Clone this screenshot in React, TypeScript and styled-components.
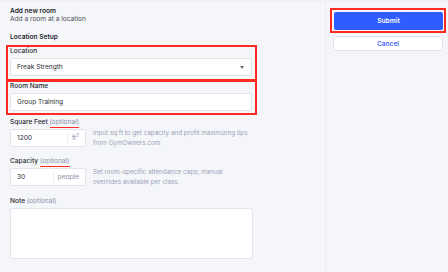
import styled, { createGlobalStyle } from 'styled-components';

const GlobalStyle = createGlobalStyle`
  html, body {
    margin: 0;
    padding: 0;
    background: #f5f6fa;
  }
  body {
    font-family: Inter, "Liberation Sans", sans-serif;
    color: #2b2d33;
    -webkit-font-smoothing: antialiased;
  }
  * { box-sizing: border-box; }
`;

const App = (): JSX.Element => {
  return (
    <>
      <GlobalStyle />
      <Page>
        <Main>
          <Header>
            <Title>Add new room</Title>
            <Subtitle>Add a room at a location</Subtitle>
          </Header>
          <SectionTitle>Location Setup</SectionTitle>

          <Highlight>
            <Label>Location</Label>
            <SelectBox>
              <span>Freak Strength</span>
              <Caret />
            </SelectBox>
          </Highlight>

          <Highlight $joined>
            <Label>Room Name</Label>
            <TextBox>Group Training</TextBox>
          </Highlight>

          <Field $gap={3}>
            <Label>
              Square Feet <Optional $marked>(optional)</Optional>
            </Label>
            <InlineRow>
              <UnitBox>
                <UnitValue>1200</UnitValue>
                <Unit>
                  ft<sup>2</sup>
                </Unit>
              </UnitBox>
              <Helper>
                Input sq ft to get capacity and profit maximizing tips
                <br />
                from GymOwners.com
              </Helper>
            </InlineRow>
          </Field>

          <Field $gap={9}>
            <Label>
              Capacity <Optional $marked>(optional)</Optional>
            </Label>
            <InlineRow>
              <UnitBox>
                <UnitValue>30</UnitValue>
                <Unit>people</Unit>
              </UnitBox>
              <Helper>
                Set room-specific attendance caps; manual
                <br />
                overrides available per class.
              </Helper>
            </InlineRow>
          </Field>

          <Field $gap={10}>
            <Label>
              Note <Optional>(optional)</Optional>
            </Label>
            <NoteArea />
          </Field>
        </Main>

        <Sidebar>
          <SubmitMark>
            <SubmitButton>Submit</SubmitButton>
          </SubmitMark>
          <CancelButton>Cancel</CancelButton>
        </Sidebar>
      </Page>
    </>
  );
};

export default App;

const Page = styled.div`
  display: flex;
  width: 448px;
  height: 272px;
  overflow: hidden;
  border-top: 1px solid #eef0f4;
`;

const Main = styled.div`
  width: 326px;
  padding: 6px 73px 0 10px;
  border-right: 1px solid #eceef3;
  display: flex;
  flex-direction: column;
`;

const Header = styled.div`
  display: flex;
  flex-direction: column;
`;

const Title = styled.div`
  font-size: 6.6px;
  line-height: 8px;
  font-weight: 600;
  color: #26282e;
`;

const Subtitle = styled.div`
  font-size: 6.6px;
  line-height: 8px;
  color: #4a4d55;
`;

const SectionTitle = styled.div`
  margin-top: 10px;
  font-size: 6.6px;
  line-height: 8px;
  font-weight: 600;
  color: #26282e;
`;

const Highlight = styled.div<{ $joined?: boolean }>`
  display: flex;
  flex-direction: column;
  gap: 3px;
  margin: ${p => (p.$joined ? '-1px' : '4px')} -5px 0 -4px;
  padding: 0 3px ${p => (p.$joined ? '2px' : '3px')} 2px;
  border: 2px solid #ff2a22;
`;

const Field = styled.div<{ $gap: number }>`
  display: flex;
  flex-direction: column;
  gap: 3px;
  margin-top: ${p => p.$gap}px;
`;

const Label = styled.div`
  font-size: 6.6px;
  line-height: 8px;
  font-weight: 500;
  color: #2b2d33;
  white-space: nowrap;
`;

const Optional = styled.span<{ $marked?: boolean }>`
  color: #8b92a8;
  font-weight: 400;
  padding-bottom: 1px;
  border-bottom: 1px solid ${p => (p.$marked ? '#ff2a22' : 'transparent')};
`;

const inputBase = `
  background: #ffffff;
  border: 1px solid #e2e4ea;
  border-radius: 3px;
  font-size: 6.6px;
  color: #2b2d33;
`;

const SelectBox = styled.div`
  ${inputBase}
  height: 18px;
  display: flex;
  align-items: center;
  justify-content: space-between;
  padding: 0 7px 0 6px;
`;

const Caret = styled.span`
  width: 0;
  height: 0;
  border-left: 2.5px solid transparent;
  border-right: 2.5px solid transparent;
  border-top: 3px solid #6a6d75;
`;

const TextBox = styled.div`
  ${inputBase}
  height: 18px;
  display: flex;
  align-items: center;
  padding: 0 6px;
`;

const InlineRow = styled.div`
  display: flex;
  align-items: flex-start;
  gap: 7px;
`;

const UnitBox = styled.div`
  ${inputBase}
  width: 76px;
  height: 18px;
  flex-shrink: 0;
  display: flex;
  align-items: stretch;
`;

const UnitValue = styled.div`
  flex: 1;
  display: flex;
  align-items: center;
  padding-left: 6px;
`;

const Unit = styled.div`
  display: flex;
  align-items: center;
  margin: 3px 0;
  padding: 0 6px 0 4px;
  border-left: 1px solid #eceef2;
  color: #8b92a8;

  sup {
    font-size: 4.5px;
    line-height: 0;
    margin-top: -4px;
  }
`;

const Helper = styled.div`
  margin-top: -1px;
  font-size: 6.3px;
  line-height: 10px;
  color: #9aa1b6;
  white-space: nowrap;
`;

const NoteArea = styled.div`
  ${inputBase}
  width: 243px;
  height: 51px;
`;

const Sidebar = styled.div`
  flex: 1;
  padding: 7px 5px 0 4px;
  display: flex;
  flex-direction: column;
  gap: 3px;
`;

const SubmitMark = styled.div`
  border: 2px solid #ff2a22;
  padding: 2px 1px 1px 2px;
  margin-right: -3px;
`;

const buttonBase = `
  height: 18px;
  width: 100%;
  border-radius: 2px;
  font-family: Inter, "Liberation Sans", sans-serif;
  font-size: 6.6px;
  font-weight: 600;
  display: flex;
  align-items: center;
  justify-content: center;
  cursor: pointer;
`;

const SubmitButton = styled.button`
  ${buttonBase}
  background: #2f5cff;
  color: #ffffff;
  border: none;
`;

const CancelButton = styled.button`
  ${buttonBase}
  margin-left: 3px;
  width: 110px;
  height: 15px;
  background: #ffffff;
  color: #4a6bf8;
  border: 1px solid #dfe3ef;
`;
